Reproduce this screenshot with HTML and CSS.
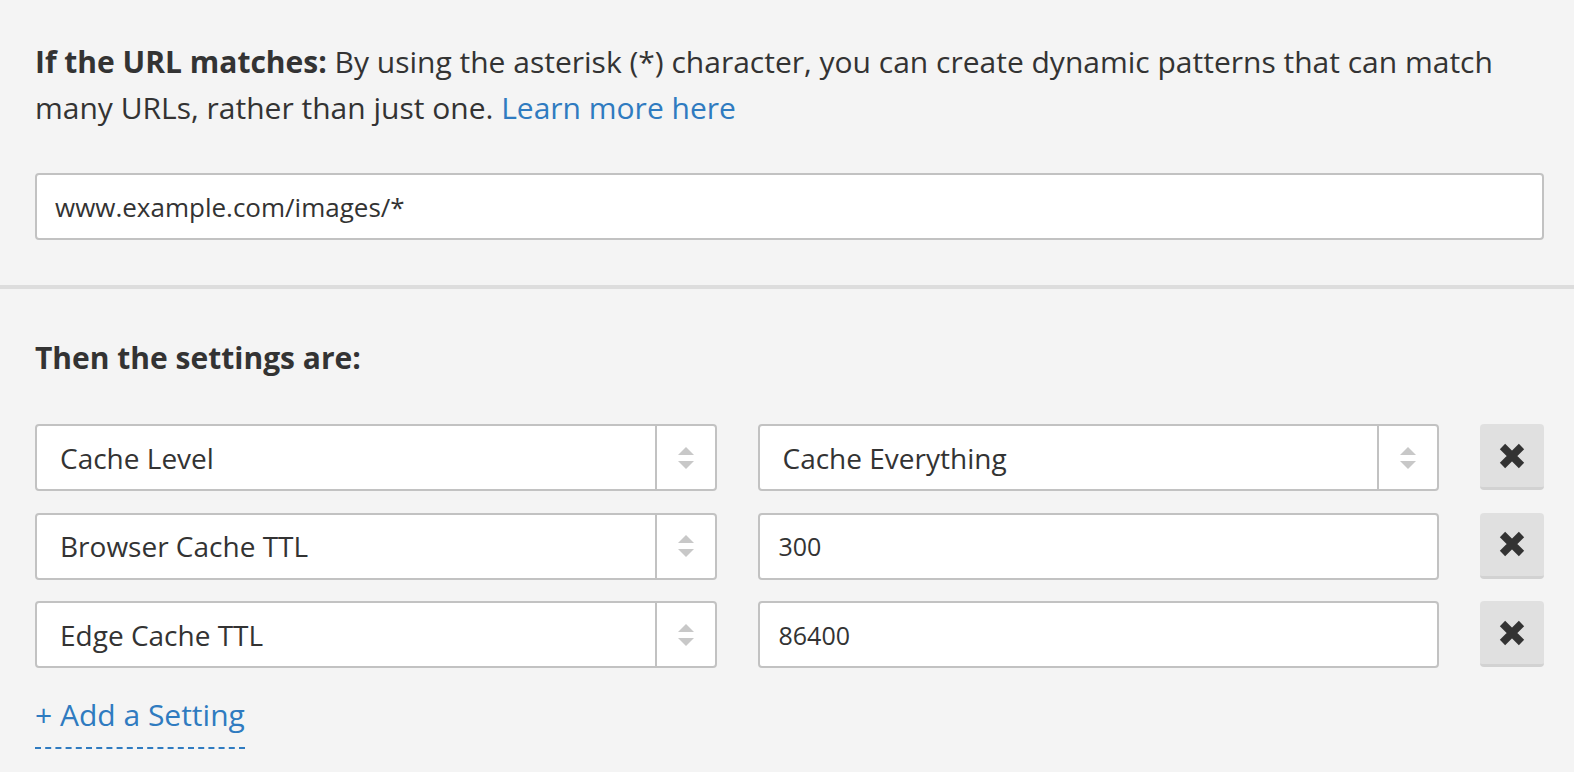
FILE: index.html
```html
<!DOCTYPE html>
<html lang="en">
<head>
<meta charset="utf-8">
<title>Page Rule</title>
<link rel="stylesheet" href="styles.css">
</head>
<body>
<section class="match">
  <p class="intro"><strong>If the URL matches:</strong> By using the asterisk (*) character, you can create dynamic patterns that can match many URLs, rather than just one. <a class="link" href="#">Learn more here</a></p>
  <div class="field url-field">www.example.com/images/*</div>
</section>
<section class="settings">
  <h2 class="heading">Then the settings are:</h2>
  <div class="rows">
    <div class="row">
      <div class="field select"><span class="select-label">Cache Level</span><span class="select-arrows"><i class="tri up"></i><i class="tri down"></i></span></div>
      <div class="field select"><span class="select-label">Cache Everything</span><span class="select-arrows"><i class="tri up"></i><i class="tri down"></i></span></div>
      <button class="remove" type="button" aria-label="Remove"><svg viewBox="0 0 26 26" width="26" height="26"><path d="M3.5 3.5 L22.5 22.5 M22.5 3.5 L3.5 22.5" stroke="#333" stroke-width="7.5" fill="none"/></svg></button>
    </div>
    <div class="row">
      <div class="field select"><span class="select-label">Browser Cache TTL</span><span class="select-arrows"><i class="tri up"></i><i class="tri down"></i></span></div>
      <div class="field value">300</div>
      <button class="remove" type="button" aria-label="Remove"><svg viewBox="0 0 26 26" width="26" height="26"><path d="M3.5 3.5 L22.5 22.5 M22.5 3.5 L3.5 22.5" stroke="#333" stroke-width="7.5" fill="none"/></svg></button>
    </div>
    <div class="row">
      <div class="field select"><span class="select-label">Edge Cache TTL</span><span class="select-arrows"><i class="tri up"></i><i class="tri down"></i></span></div>
      <div class="field value">86400</div>
      <button class="remove" type="button" aria-label="Remove"><svg viewBox="0 0 26 26" width="26" height="26"><path d="M3.5 3.5 L22.5 22.5 M22.5 3.5 L3.5 22.5" stroke="#333" stroke-width="7.5" fill="none"/></svg></button>
    </div>
  </div>
  <a class="add" href="#">+ Add a Setting</a>
</section>
</body>
</html>
```

FILE: styles.css
```css
* { box-sizing: border-box; }
html, body { margin: 0; }
body {
  background: #f4f4f4;
  color: #333;
  font-family: "Open Sans", "Liberation Sans", sans-serif;
  font-size: 30px;
  line-height: 46px;
}
.match {
  padding: 39px 30px 45px 35px;
  border-bottom: 4px solid #dddddd;
}
.intro {
  margin: 0 0 42px;
}
.intro strong { font-weight: 700; }
.link, .add {
  color: #2f7bc0;
  text-decoration: none;
}
.field {
  background: #fff;
  border: 2px solid #c2c2c2;
  border-radius: 4px;
  height: 67px;
  display: flex;
  align-items: center;
}
.url-field {
  padding: 0 18px;
  font-size: 26px;
}
.settings {
  padding: 46px 30px 24px 35px;
}
.heading {
  margin: 0 0 43px;
  font-size: 30px;
  line-height: 46px;
  font-weight: 700;
}
.rows {
  display: flex;
  flex-direction: column;
  gap: 21.5px;
}
.row {
  display: grid;
  grid-template-columns: 1fr 1fr 64px;
  column-gap: 41px;
}
.select {
  padding: 0;
  align-items: stretch;
  font-size: 28px;
}
.select-label {
  flex: 1;
  display: flex;
  align-items: center;
  padding-left: 23px;
}
.select-arrows {
  width: 60px;
  border-left: 2px solid #c2c2c2;
  display: flex;
  flex-direction: column;
  align-items: center;
  justify-content: center;
  gap: 6px;
}
.tri {
  width: 0;
  height: 0;
  border-left: 8px solid transparent;
  border-right: 8px solid transparent;
}
.tri.up { border-bottom: 8px solid #c8c8c8; }
.tri.down { border-top: 8px solid #c8c8c8; }
.value {
  padding: 0 19px;
  font-size: 25px;
}
.remove {
  height: 66px;
  border: 0;
  border-bottom: 3px solid #d2d2d2;
  border-radius: 4px;
  background: #e0e0e0;
  display: flex;
  align-items: center;
  justify-content: center;
  padding: 0;
}
.remove svg { display: block; }
.add {
  display: inline-block;
  margin-top: 27px;
  font-size: 30px;
  line-height: 40px;
  padding-bottom: 12px;
  border-bottom: 2px dashed #2f7bc0;
}
```
